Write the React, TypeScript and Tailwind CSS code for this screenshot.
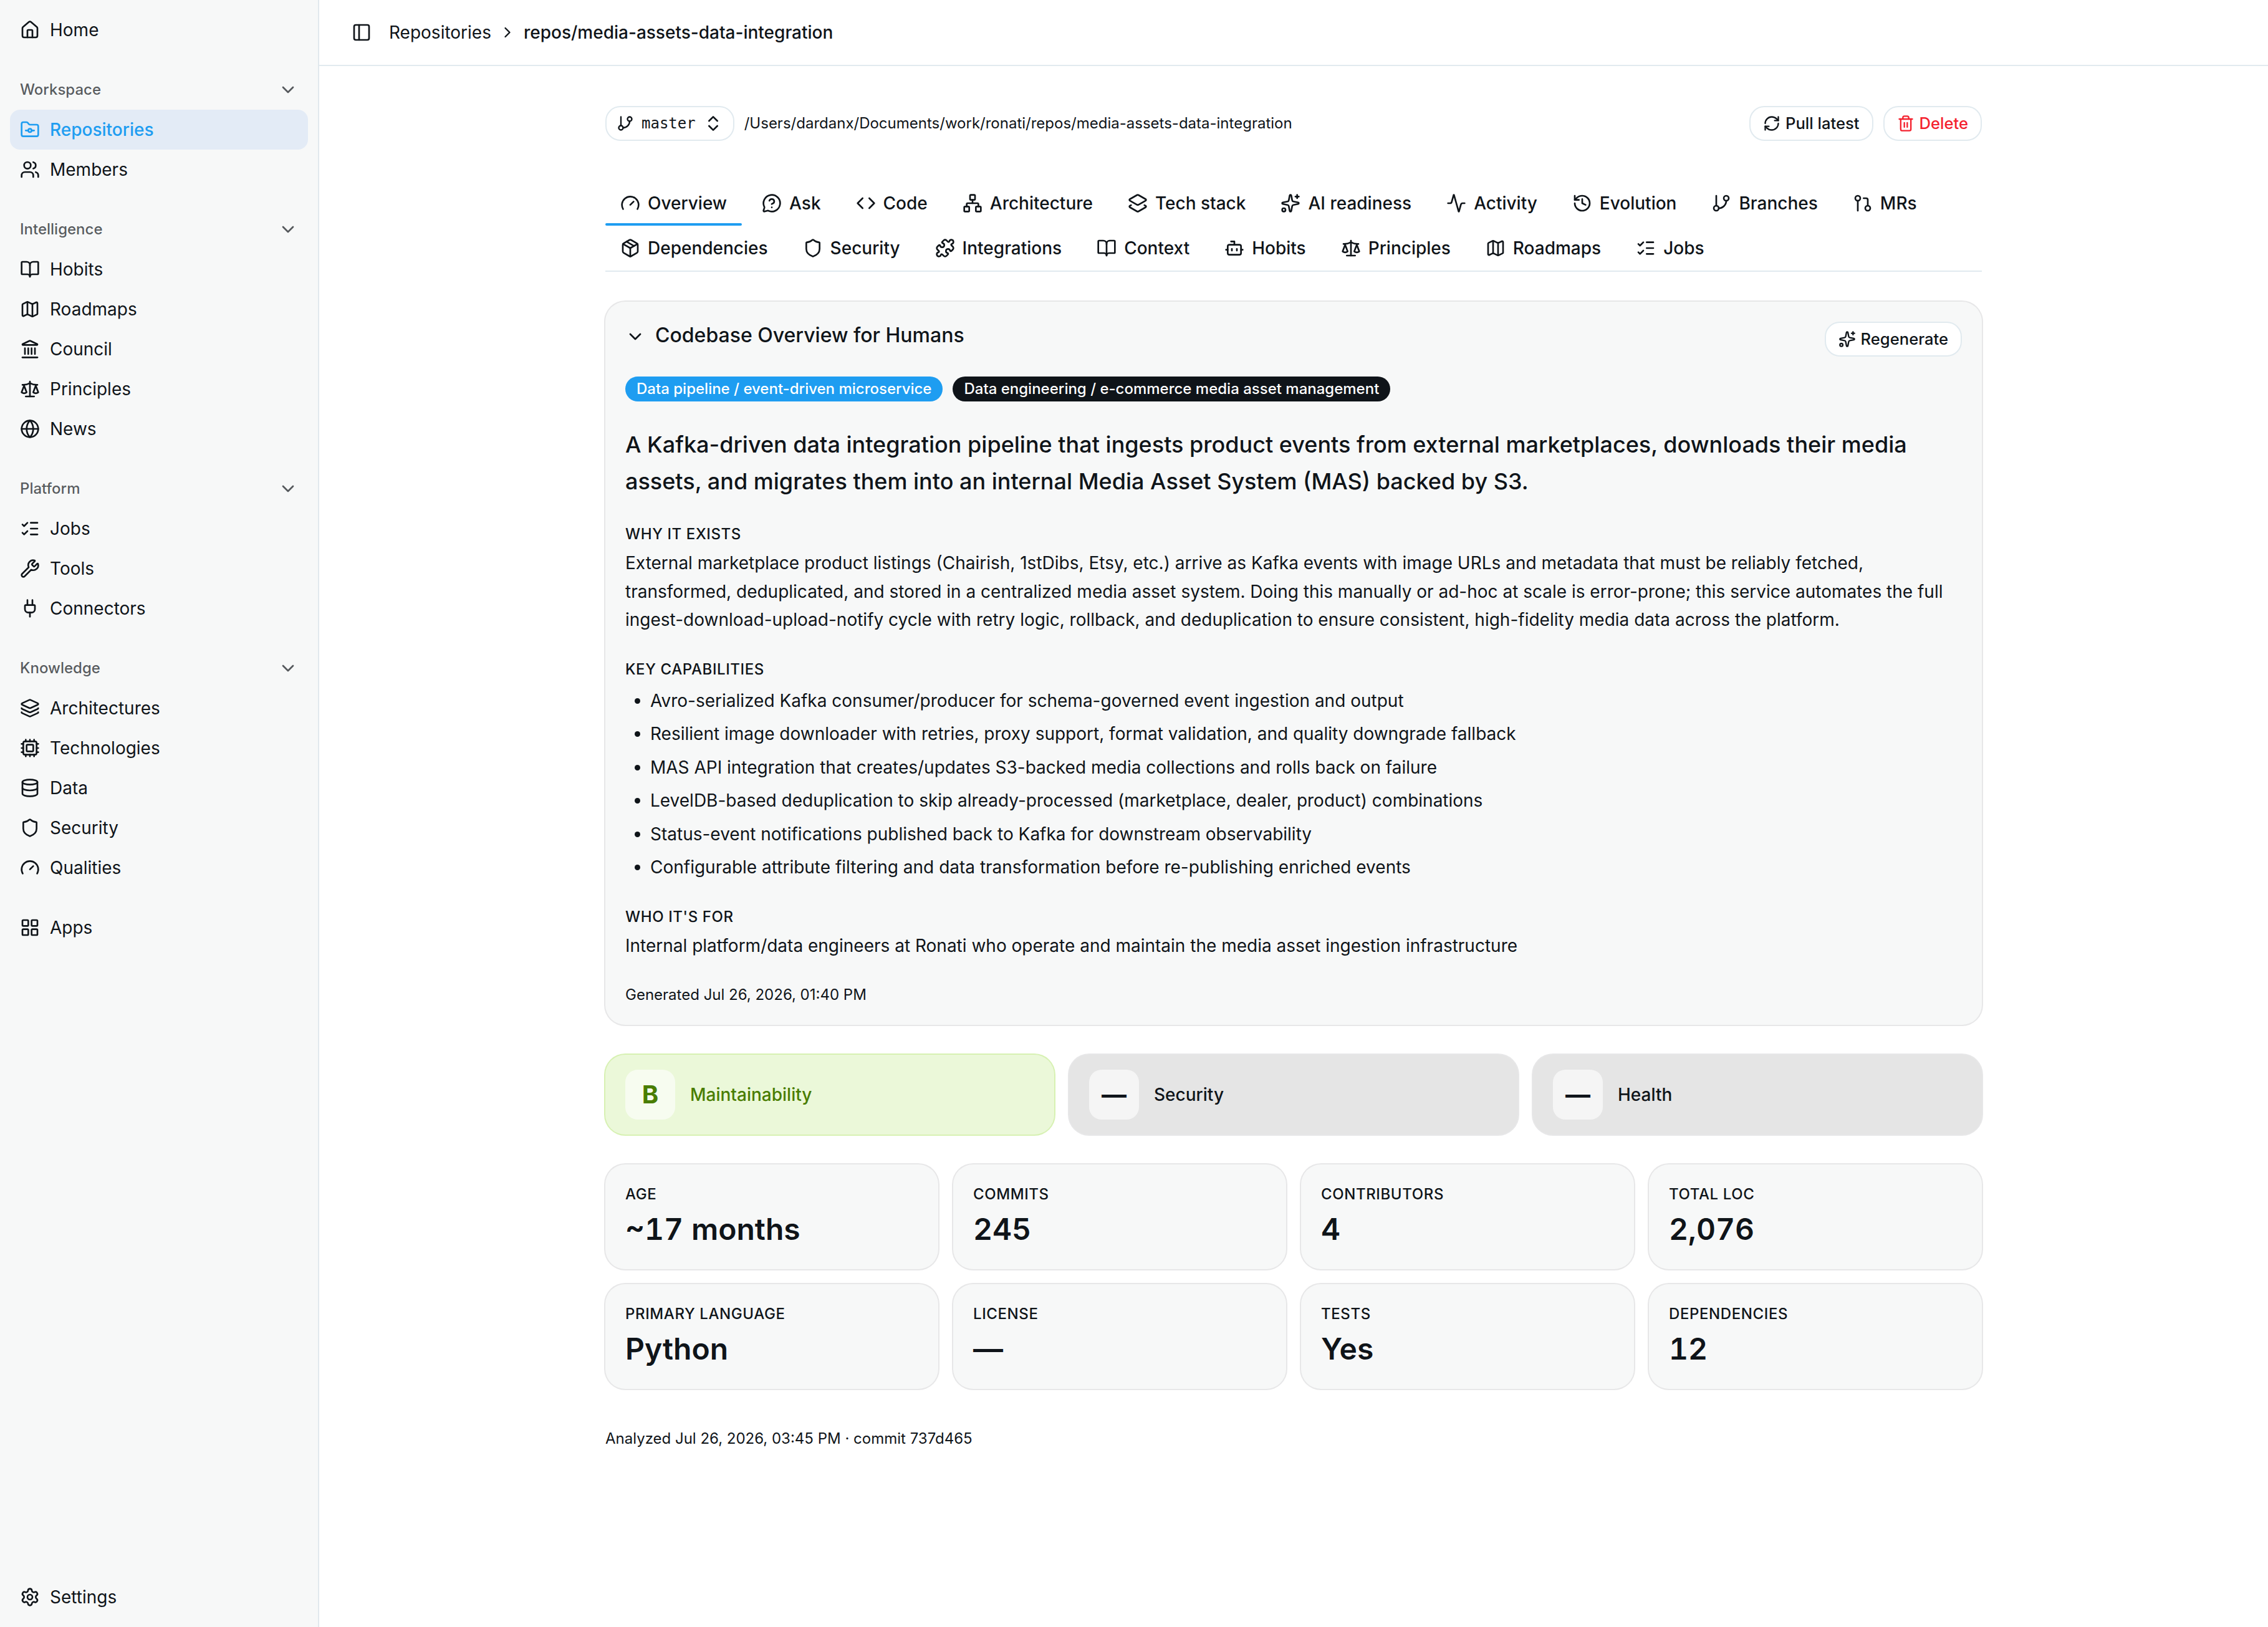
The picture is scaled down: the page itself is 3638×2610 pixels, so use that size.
import React from "react";
import {
  Activity, BookOpen, Bot, ChevronDown, ChevronRight, ChevronsUpDown, Code, Cpu, Database,
  FolderGit, Gauge, GitBranch, GitPullRequest, Globe, History, House, Landmark, Layers, Layers2,
  LayoutGrid, ListChecks, Map as MapIcon, MessageCircleQuestionMark, Network, Package, PanelLeft,
  Plug, Puzzle, RefreshCw, Scale, Settings, Shield, Sparkles, Trash2, Users, Wrench,
  type LucideIcon,
} from "lucide-react";

type Item = { icon: LucideIcon; label: string; active?: boolean };

const groups: { title: string; items: Item[] }[] = [
  { title: "Workspace", items: [
    { icon: FolderGit, label: "Repositories", active: true },
    { icon: Users, label: "Members" },
  ] },
  { title: "Intelligence", items: [
    { icon: BookOpen, label: "Hobits" },
    { icon: MapIcon, label: "Roadmaps" },
    { icon: Landmark, label: "Council" },
    { icon: Scale, label: "Principles" },
    { icon: Globe, label: "News" },
  ] },
  { title: "Platform", items: [
    { icon: ListChecks, label: "Jobs" },
    { icon: Wrench, label: "Tools" },
    { icon: Plug, label: "Connectors" },
  ] },
  { title: "Knowledge", items: [
    { icon: Layers, label: "Architectures" },
    { icon: Cpu, label: "Technologies" },
    { icon: Database, label: "Data" },
    { icon: Shield, label: "Security" },
    { icon: Gauge, label: "Qualities" },
  ] },
];

const tabs: Item[] = [
  { icon: Gauge, label: "Overview", active: true },
  { icon: MessageCircleQuestionMark, label: "Ask" },
  { icon: Code, label: "Code" },
  { icon: Network, label: "Architecture" },
  { icon: Layers2, label: "Tech stack" },
  { icon: Sparkles, label: "AI readiness" },
  { icon: Activity, label: "Activity" },
  { icon: History, label: "Evolution" },
  { icon: GitBranch, label: "Branches" },
  { icon: GitPullRequest, label: "MRs" },
  { icon: Package, label: "Dependencies" },
  { icon: Shield, label: "Security" },
  { icon: Puzzle, label: "Integrations" },
  { icon: BookOpen, label: "Context" },
  { icon: Bot, label: "Hobits" },
  { icon: Scale, label: "Principles" },
  { icon: MapIcon, label: "Roadmaps" },
  { icon: ListChecks, label: "Jobs" },
];

const capabilities = [
  "Avro-serialized Kafka consumer/producer for schema-governed event ingestion and output",
  "Resilient image downloader with retries, proxy support, format validation, and quality downgrade fallback",
  "MAS API integration that creates/updates S3-backed media collections and rolls back on failure",
  "LevelDB-based deduplication to skip already-processed (marketplace, dealer, product) combinations",
  "Status-event notifications published back to Kafka for downstream observability",
  "Configurable attribute filtering and data transformation before re-publishing enriched events",
];

const stats = [
  ["Age", "~17 months"],
  ["Commits", "245"],
  ["Contributors", "4"],
  ["Total LOC", "2,076"],
  ["Primary language", "Python"],
  ["License", "—"],
  ["Tests", "Yes"],
  ["Dependencies", "12"],
];

function NavItem({ icon: Icon, label, active }: Item) {
  return (
    <a
      className={
        active
          ? "flex h-16 items-center gap-4 rounded-[16px] bg-[#e3ebf6] px-4 text-[28px] font-medium text-[#1e9df1]"
          : "flex h-16 items-center gap-4 rounded-[16px] px-4 text-[28px]"
      }
    >
      <Icon className="size-8 shrink-0" />
      <span>{label}</span>
    </a>
  );
}

function Sidebar() {
  return (
    <aside className="flex w-[512px] shrink-0 flex-col border-r-2 border-[#e1e8ed] bg-[#f7f8f8]">
      <div className="p-4">
        <NavItem icon={House} label="Home" />
      </div>
      {groups.map((g) => (
        <div key={g.title} className="p-4">
          <div className="flex h-16 items-center justify-between px-4 text-[24px] font-medium text-[#0f1419]/70">
            <span>{g.title}</span>
            <ChevronDown className="size-8" />
          </div>
          {g.items.map((i) => (
            <NavItem key={i.label} {...i} />
          ))}
        </div>
      ))}
      <div className="p-4">
        <NavItem icon={LayoutGrid} label="Apps" />
      </div>
      <div className="mt-auto p-4">
        <NavItem icon={Settings} label="Settings" />
      </div>
    </aside>
  );
}

function Button({ icon: Icon, label, danger }: { icon: LucideIcon; label: string; danger?: boolean }) {
  return (
    <button
      className={
        danger
          ? "flex h-14 shrink-0 items-center gap-2 rounded-[24px] border-2 border-[#e1eaef] bg-white px-5 text-[25.6px] font-medium whitespace-nowrap text-[#f4212e]"
          : "flex h-14 shrink-0 items-center gap-2 rounded-[24px] border-2 border-[#e1eaef] bg-white px-5 text-[25.6px] font-medium whitespace-nowrap"
      }
    >
      <Icon className="size-7" />
      {label}
    </button>
  );
}

function SectionLabel({ children }: { children: React.ReactNode }) {
  return <h3 className="text-[24px] leading-8 font-medium tracking-wide uppercase">{children}</h3>;
}

function OverviewCard() {
  return (
    <section className="mt-12 flex flex-col rounded-[32px] bg-[#f7f8f8] p-8 ring-2 ring-[#0f1419]/10">
      <div className="flex items-start justify-between">
        <div className="flex items-center gap-4">
          <ChevronDown className="mt-1 size-8" />
          <h2 className="text-[32px] leading-[44px] font-medium">Codebase Overview for Humans</h2>
        </div>
        <Button icon={Sparkles} label="Regenerate" />
      </div>
      <div className="mt-8 flex gap-4">
        <span className="flex h-10 items-center rounded-full bg-[#1e9df1] px-[18px] text-[24px] font-medium text-white">
          Data pipeline / event-driven microservice
        </span>
        <span className="flex h-10 items-center rounded-full bg-[#0f1419] px-[18px] text-[24px] font-medium text-white">
          Data engineering / e-commerce media asset management
        </span>
      </div>
      <p className="mt-10 text-[36px] leading-[58.5px] font-medium">
        A Kafka-driven data integration pipeline that ingests product events from external marketplaces, downloads their
        media assets, and migrates them into an internal Media Asset System (MAS) backed by S3.
      </p>
      <div className="mt-10">
        <SectionLabel>Why it exists</SectionLabel>
        <p className="mt-2 text-[28px] leading-[45.5px]">
          External marketplace product listings (Chairish, 1stDibs, Etsy, etc.) arrive as Kafka events with image URLs
          and metadata that must be reliably fetched, transformed, deduplicated, and stored in a centralized media asset
          system. Doing this manually or ad-hoc at scale is error-prone; this service automates the full
          ingest-download-upload-notify cycle with retry logic, rollback, and deduplication to ensure consistent,
          high-fidelity media data across the platform.
        </p>
      </div>
      <div className="mt-10">
        <SectionLabel>Key capabilities</SectionLabel>
        <ul className="mt-3 list-disc space-y-2 pl-10 text-[28px] leading-[45.5px]">
          {capabilities.map((c) => (
            <li key={c}>{c}</li>
          ))}
        </ul>
      </div>
      <div className="mt-10">
        <SectionLabel>Who it's for</SectionLabel>
        <p className="mt-2 text-[28px] leading-[45.5px]">
          Internal platform/data engineers at Ronati who operate and maintain the media asset ingestion infrastructure
        </p>
      </div>
      <p className="mt-10 text-[24px] leading-8">Generated Jul 26, 2026, 01:40 PM</p>
    </section>
  );
}

function Grade({ grade, label, good }: { grade: string; label: string; good?: boolean }) {
  return (
    <div
      className={
        good
          ? "flex items-center gap-6 rounded-[32px] bg-[#7ccf00]/15 px-8 py-6 text-[#497d00] ring-2 ring-[#7ccf00]/30"
          : "flex items-center gap-6 rounded-[32px] bg-[#e5e5e5] px-8 py-6 ring-2 ring-[#0f1419]/10"
      }
    >
      <span className="flex size-20 items-center justify-center rounded-[20px] bg-white/60 text-[40px] font-bold">
        {grade}
      </span>
      <span className="text-[28px] font-medium">{label}</span>
    </div>
  );
}

export default function App() {
  return (
    <div className="flex h-[2610px] w-[3638px] bg-white font-['Inter',sans-serif] text-[#0f1419]">
      <Sidebar />
      <div className="flex min-w-0 flex-1 flex-col">
        <header className="flex h-[106px] items-center border-b-2 border-[#e1eaef] pl-[52px] text-[28px]">
          <PanelLeft className="size-8" />
          <span className="ml-7">Repositories</span>
          <ChevronRight className="mx-3 size-7" />
          <span className="font-medium">repos/media-assets-data-integration</span>
        </header>
        <main className="mx-auto w-[2208px] pt-16">
          <div className="flex items-center gap-4">
            <button className="flex h-14 items-center gap-3 rounded-[24px] border-2 border-[#e1eaef] px-4 font-['DejaVu_Sans_Mono',monospace] text-[24px]">
              <GitBranch className="size-7" />
              master
              <ChevronsUpDown className="size-8" />
            </button>
            <span className="text-[24px]">/Users/dardanx/Documents/work/ronati/repos/media-assets-data-integration</span>
            <div className="ml-auto flex gap-4">
              <Button icon={RefreshCw} label="Pull latest" />
              <Button icon={Trash2} label="Delete" danger />
            </div>
          </div>
          <nav className="mt-16 flex flex-wrap gap-x-2 border-b-2 border-[#e1eaef]">
            {tabs.map(({ icon: Icon, label, active }) => (
              <a key={label} className="relative flex h-[72px] items-center gap-3 px-6 text-[28px] font-medium">
                <Icon className="size-8" />
                {label}
                {active && <span className="absolute inset-x-0 bottom-0 h-1 rounded-full bg-[#1e9df1]" />}
              </a>
            ))}
          </nav>
          <OverviewCard />
          <div className="mt-12 grid grid-cols-3 gap-6">
            <Grade grade="B" label="Maintainability" good />
            <Grade grade="—" label="Security" />
            <Grade grade="—" label="Health" />
          </div>
          <div className="mt-12 grid grid-cols-4 gap-6">
            {stats.map(([label, value]) => (
              <div key={label} className="rounded-[32px] bg-[#f7f8f8] p-8 ring-2 ring-[#0f1419]/10">
                <div className="text-[24px] leading-8 font-medium tracking-wide uppercase">{label}</div>
                <div className="mt-2 text-[48px] leading-[64px] font-semibold tabular-nums">{value}</div>
              </div>
            ))}
          </div>
          <p className="mt-16 text-[24px] leading-8">Analyzed Jul 26, 2026, 03:45 PM · commit 737d465</p>
        </main>
      </div>
    </div>
  );
}
